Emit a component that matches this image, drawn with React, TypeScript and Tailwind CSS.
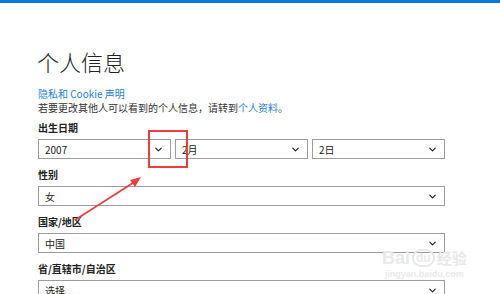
import { ChevronDown } from "lucide-react";

const font = {
  fontFamily: '"Noto Sans CJK SC", "Noto Sans", sans-serif',
};

function Select({ value }: { value: string }) {
  return (
    <div className="h-5 border border-[#9c9c9c] bg-white flex items-center justify-between pl-[6px] pr-[6px] text-[10px] text-[#222]">
      <span>{value}</span>
      <ChevronDown size={11} strokeWidth={2.6} className="text-[#222]" />
    </div>
  );
}

function Field({ label, children }: { label: string; children: React.ReactNode }) {
  return (
    <div className="flex flex-col">
      <div className="h-5 leading-5 text-[10px] font-bold text-[#222]">{label}</div>
      <div className="mt-px">{children}</div>
    </div>
  );
}

export default function App() {
  return (
    <div className="relative w-[500px] h-[294px] overflow-hidden bg-white" style={font}>
      <div className="h-[3px] bg-[#0a78d6]" />
      <div className="pl-[38px] w-[445px]">
        <h1 className="mt-[43px] text-[22px] leading-[30px] font-light text-[#222] -ml-px">个人信息</h1>
        <div className="mt-[11px] text-[10px] leading-[14px]">
          <div className="text-[#1a7fd4]">隐私和 Cookie 声明</div>
          <div className="text-[#333]">
            若要更改其他人可以看到的个人信息，请转到<span className="text-[#1a7fd4]">个人资料</span>。
          </div>
        </div>
        <div className="mt-[3px] flex flex-col gap-[6px]">
          <Field label="出生日期">
            <div className="grid grid-cols-3 gap-[4px]">
              <Select value="2007" />
              <Select value="2月" />
              <Select value="2日" />
            </div>
          </Field>
          <Field label="性别">
            <Select value="女" />
          </Field>
          <Field label="国家/地区">
            <Select value="中国" />
          </Field>
          <Field label="省/直辖市/自治区">
            <Select value="选择..." />
          </Field>
        </div>
      </div>

      {/* watermark */}
      <div className="absolute left-[382px] top-[248px] flex flex-col items-center text-[#e8e8e8] pointer-events-none">
        <div className="flex items-center gap-[2px] text-[18px] leading-[20px] font-bold" style={{ fontFamily: '"Liberation Sans", sans-serif' }}>
          <span>Bai</span>
          <span className="rounded-full border-2 border-[#e8e8e8] px-[2px] text-[12px] leading-[14px]">du</span>
          <span className="text-[15px]" style={font}>经验</span>
        </div>
        <div className="text-[9px] leading-[12px] font-bold" style={{ fontFamily: '"Liberation Sans", sans-serif' }}>
          jingyan.baidu.com
        </div>
      </div>

      {/* annotation */}
      <div className="absolute left-[148px] top-[130px] w-[40px] h-[38px] border-2 border-[#ee3b3b]" />
      <svg className="absolute inset-0 pointer-events-none" width="500" height="294">
        <line x1="75" y1="220" x2="136" y2="181" stroke="#ee3b3b" strokeWidth="1.6" />
        <polygon points="141,177 130,180 135,187" fill="#ee3b3b" />
      </svg>
    </div>
  );
}
